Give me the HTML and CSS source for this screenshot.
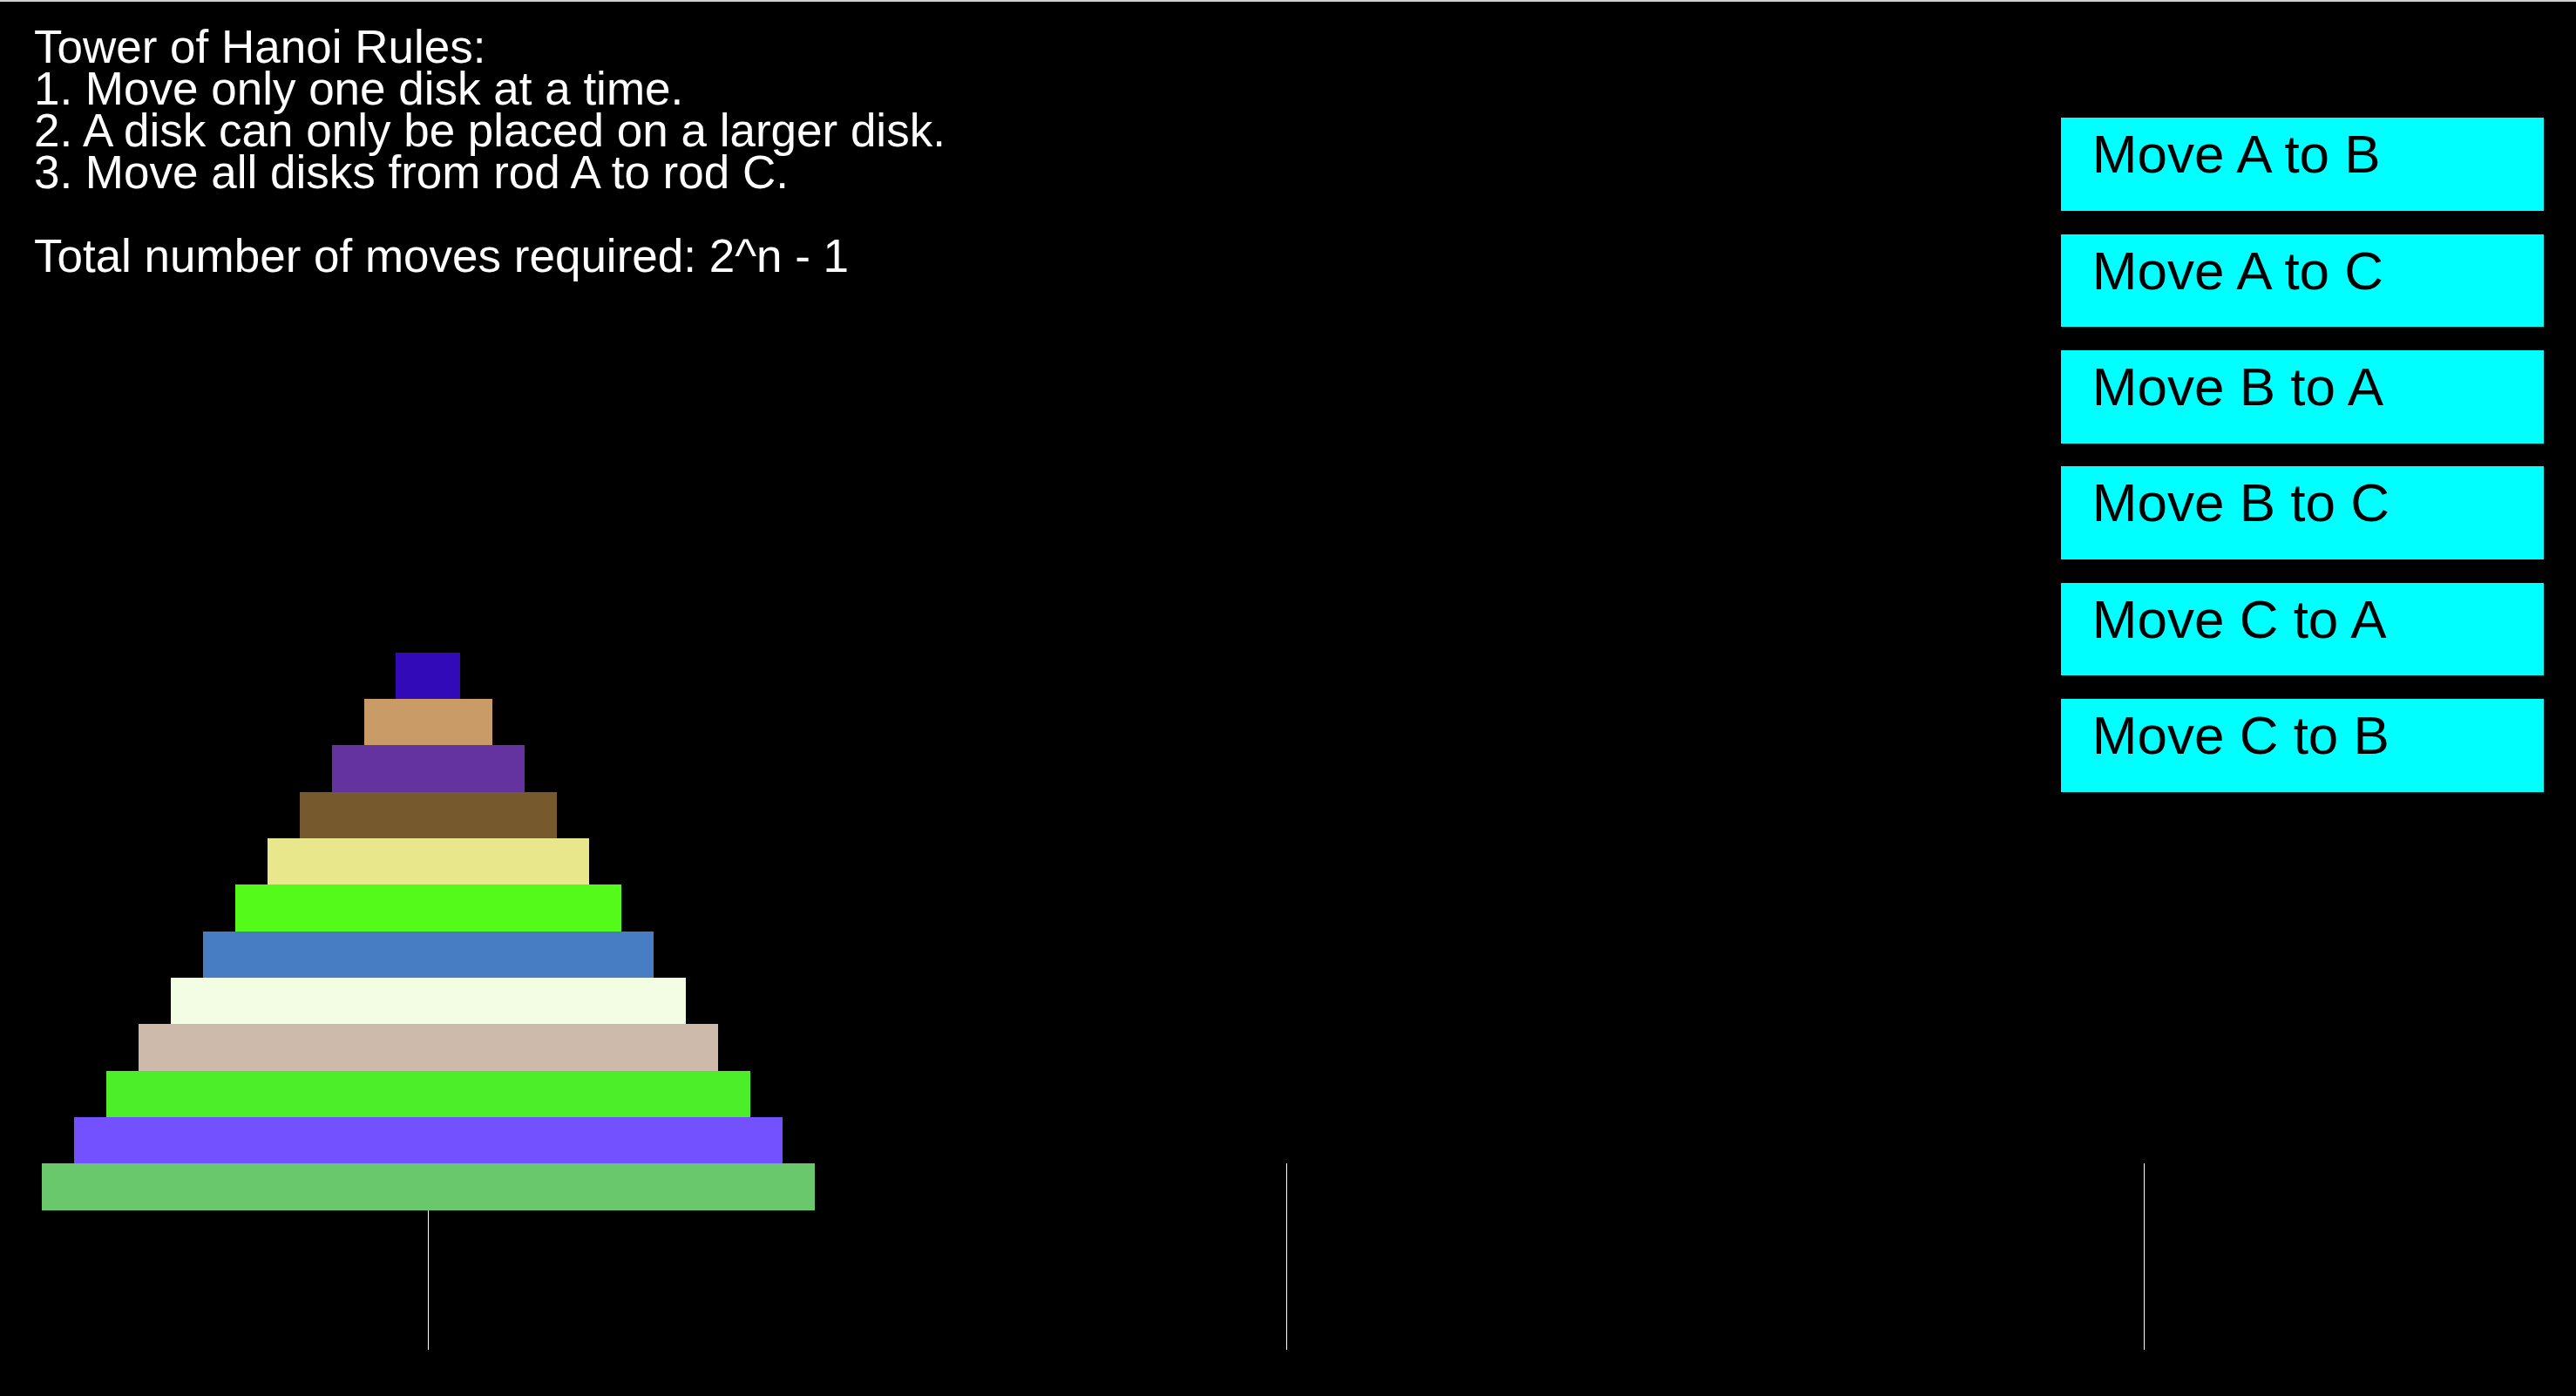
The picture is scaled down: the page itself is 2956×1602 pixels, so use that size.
FILE: index.html
```html
<!DOCTYPE html>
<html lang="en">
<head>
<meta charset="utf-8">
<title>Tower of Hanoi</title>
<link rel="stylesheet" href="styles.css">
</head>
<body>
<main class="game">
  <section class="rods" aria-label="Rods">
    <div class="rod">
      <div class="disk disk-1"></div>
      <div class="disk disk-2"></div>
      <div class="disk disk-3"></div>
      <div class="disk disk-4"></div>
      <div class="disk disk-5"></div>
      <div class="disk disk-6"></div>
      <div class="disk disk-7"></div>
      <div class="disk disk-8"></div>
      <div class="disk disk-9"></div>
      <div class="disk disk-10"></div>
      <div class="disk disk-11"></div>
      <div class="disk disk-12"></div>
    </div>
    <div class="rod"></div>
    <div class="rod"></div>
  </section>
  <header class="top">
    <div class="rules">
      <p>Tower of Hanoi Rules:</p>
      <p>1. Move only one disk at a time.</p>
      <p>2. A disk can only be placed on a larger disk.</p>
      <p>3. Move all disks from rod A to rod C.</p>
      <p class="total">Total number of moves required: 2^n - 1</p>
    </div>
    <div class="moves">
      <button class="move" type="button">Move A to B</button>
      <button class="move" type="button">Move A to C</button>
      <button class="move" type="button">Move B to A</button>
      <button class="move" type="button">Move B to C</button>
      <button class="move" type="button">Move C to A</button>
      <button class="move" type="button">Move C to B</button>
    </div>
  </header>
</main>
</body>
</html>
```

FILE: styles.css
```css
/* The board is 800 units wide and 600 units high, scaled to the window. */
:root {
  --u: calc(100vw / 800);
  --v: calc((100vh - 2px) / 600);
}

* {
  box-sizing: border-box;
}

body {
  margin: 0;
  background: #000;
  color: #fff;
  font-family: "Liberation Sans", Arial, sans-serif;
}

.game {
  display: grid;
  min-height: 100vh;
  border-top: 2px solid #cfcfcf;
}

/* Both layers share one cell: the tower may grow up beside the buttons. */
.top,
.rods {
  grid-area: 1 / 1;
}

.top {
  z-index: 1;
  display: flex;
  justify-content: space-between;
  align-items: flex-start;
  align-self: start;
  padding: 0 calc(10 * var(--u));
}

.rules {
  padding: 28px 0 0 2px;
  font-size: 53px;
  line-height: 48px;
}

.rules p {
  margin: 0;
}

.rules .total {
  margin-top: 48px;
}

.moves {
  display: flex;
  flex-direction: column;
  gap: calc(10 * var(--v));
  width: calc(150 * var(--u));
  padding-top: calc(50 * var(--v));
}

.move {
  display: flex;
  align-items: flex-start;
  height: calc(40 * var(--v));
  padding: 10px 36px;
  border: 0;
  border-radius: 0;
  background: #0ff;
  color: #000;
  font-family: inherit;
  font-size: 62px;
  line-height: 64px;
  white-space: nowrap;
  cursor: pointer;
}

.rods {
  display: grid;
  grid-template-columns: 266fr 267fr 266fr 1fr;
  align-self: end;
  padding-bottom: calc(20 * var(--v));
}

.rod {
  display: flex;
  flex-direction: column;
  align-items: center;
  justify-content: flex-end;
}

/* The pole stands behind the lowest disk. */
.rod::after {
  content: "";
  flex: none;
  width: 1px;
  height: calc(80 * var(--v));
  margin-top: calc(-20 * var(--v));
  background: #fff;
}

.disk {
  z-index: 1;
  flex: none;
  height: calc(20 * var(--v));
}

.disk-1 { width: calc(20 * var(--u)); background: #320ab7; }
.disk-2 { width: calc(40 * var(--u)); background: #c99b66; }
.disk-3 { width: calc(60 * var(--u)); background: #64339f; }
.disk-4 { width: calc(80 * var(--u)); background: #76592c; }
.disk-5 { width: calc(100 * var(--u)); background: #e9e78c; }
.disk-6 { width: calc(120 * var(--u)); background: #54fb1a; }
.disk-7 { width: calc(140 * var(--u)); background: #467dc3; }
.disk-8 { width: calc(160 * var(--u)); background: #f2fde3; }
.disk-9 { width: calc(180 * var(--u)); background: #cdbaab; }
.disk-10 { width: calc(200 * var(--u)); background: #4bee29; }
.disk-11 { width: calc(220 * var(--u)); background: #7351ff; }
.disk-12 { width: calc(240 * var(--u)); background: #69c86b; }
```
